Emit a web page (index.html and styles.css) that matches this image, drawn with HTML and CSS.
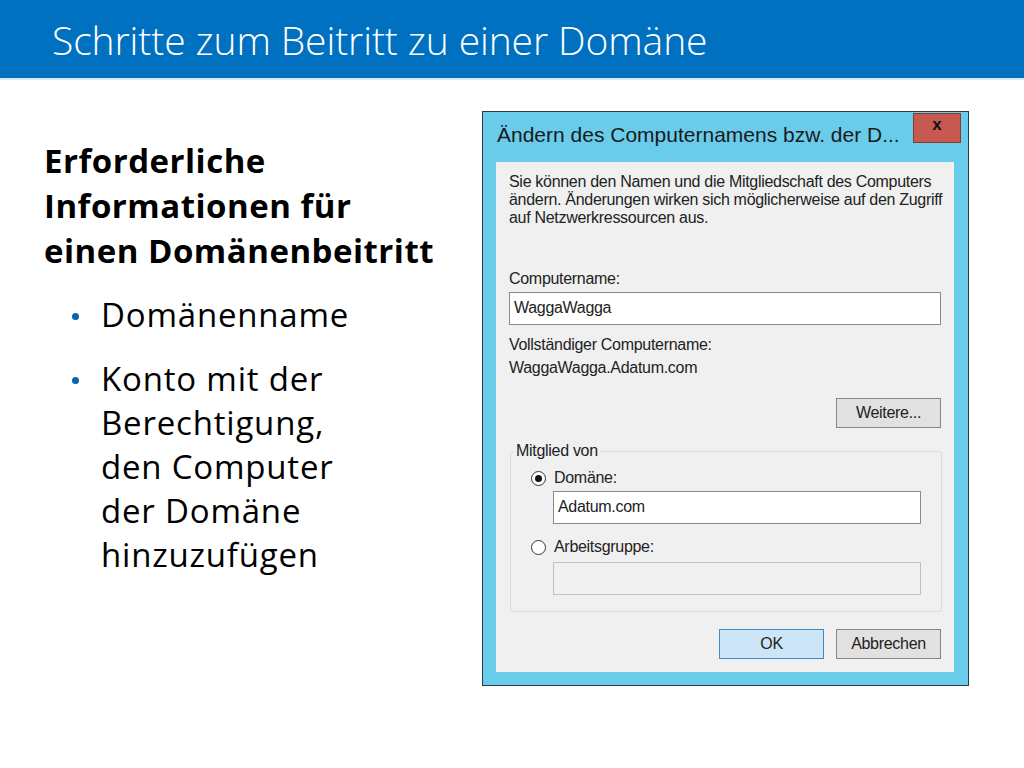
FILE: index.html
```html
<!DOCTYPE html>
<html lang="de">
<head>
    <meta charset="UTF-8">
    <title>Schritte zum Beitritt zu einer Domäne</title>
    <link rel="stylesheet" href="styles.css">
</head>
<body>

<div class="header">
    <h1>Schritte zum Beitritt zu einer Domäne</h1>
</div>

<div class="main">
    <div class="left">
        <h2>Erforderliche<br>Informationen für<br>einen Domänenbeitritt</h2>
        <ul class="bullets">
            <li>Domänenname</li>
            <li>Konto mit der<br>Berechtigung,<br>den Computer<br>der Domäne<br>hinzuzufügen</li>
        </ul>
    </div>

    <div class="dialog">
        <div class="titlebar">
            <span class="title">Ändern des Computernamens bzw. der D...</span>
            <span class="close">x</span>
        </div>
        <div class="client">
            <p class="intro">Sie können den Namen und die Mitgliedschaft des Computers<br>ändern. Änderungen wirken sich möglicherweise auf den Zugriff<br>auf Netzwerkressourcen aus.</p>

            <div class="label lbl-name">Computername:</div>
            <div class="field">WaggaWagga</div>

            <div class="label lbl-full">Vollständiger Computername:</div>
            <div class="label lbl-fqdn">WaggaWagga.Adatum.com</div>

            <div class="btn-row first">
                <span class="btn">Weitere...</span>
            </div>

            <fieldset class="group">
                <legend>Mitglied von</legend>
                <div class="radio-row"><span class="radio checked"></span>Domäne:</div>
                <div class="field sub">Adatum.com</div>
                <div class="radio-row second"><span class="radio"></span>Arbeitsgruppe:</div>
                <div class="field sub disabled"></div>
            </fieldset>

            <div class="btn-row last">
                <span class="btn default">OK</span>
                <span class="btn">Abbrechen</span>
            </div>
        </div>
    </div>
</div>

</body>
</html>
```

FILE: styles.css
```css
body {
    margin: 0;
    background: white;
    font-family: "Open Sans", "Noto Sans", sans-serif;
    color: #000;
}
.header {
    height: 78px;
    background: #0070c0;
    border-bottom: 2px solid #d4eaf7;
    display: flex;
    align-items: center;
}
.header h1 {
    margin: 0 0 0 52px;
    font-size: 39px;
    font-weight: 300;
    color: white;
    letter-spacing: -0.1px;
}
.main {
    display: flex;
    padding-top: 31px;
}
.left {
    width: 438px;
    padding-left: 44px;
}
.left h2 {
    margin: 27px 0 0 0;
    font-size: 33px;
    font-weight: 700;
    line-height: 45px;
    letter-spacing: 0.5px;
    white-space: nowrap;
}
.bullets {
    list-style: none;
    margin: 20px 0 0 0;
    padding: 0 0 0 57px;
    font-size: 33px;
    line-height: 44px;
    letter-spacing: 0.8px;
}
.bullets li {
    position: relative;
    margin-bottom: 20px;
}
.bullets li::before {
    content: "";
    position: absolute;
    left: -29px;
    top: 20px;
    width: 7px;
    height: 7px;
    border-radius: 50%;
    background: #0f62a8;
}

/* dialog */
.dialog {
    width: 485px;
    height: 573px;
    border: 1px solid #2a3b44;
    background: #69cceb;
    display: flex;
    flex-direction: column;
    font-family: "Liberation Sans", Arial, sans-serif;
}
.titlebar {
    display: flex;
    align-items: flex-start;
    height: 50px;
    padding-right: 7px;
}
.title {
    flex: 1;
    font-size: 21px;
    color: #1a1a1a;
    padding: 11px 0 0 14px;
    white-space: nowrap;
}
.close {
    width: 46px;
    height: 28px;
    margin-top: 1px;
    background: #c75a50;
    border: 1px solid #8d3a33;
    color: #111;
    font-weight: 700;
    font-size: 17px;
    text-align: center;
    line-height: 22px;
}
.client {
    margin: 0 14px 13px 13px;
    flex: 1;
    background: #f0f0f0;
    padding: 0 13px;
    font-size: 16px;
    color: #222;
    letter-spacing: -0.3px;
}
.intro {
    margin: 11px 0 0 0;
    line-height: 18px;
    white-space: nowrap;
}
.label {
    line-height: 18px;
}
.lbl-name { margin-top: 43px; }
.lbl-full { margin-top: 11px; }
.lbl-fqdn { margin-top: 5px; }
.field {
    height: 31px;
    margin-top: 4px;
    background: white;
    border: 1px solid #8a8a8a;
    padding-left: 4px;
    line-height: 30px;
    font-size: 16px;
}
.btn-row {
    display: flex;
    justify-content: flex-end;
    gap: 12px;
}
.btn-row.first { margin-top: 21px; }
.btn-row.last { margin-top: 17px; }
.btn {
    width: 103px;
    height: 28px;
    border: 1px solid #858585;
    background: #e1e1e1;
    text-align: center;
    line-height: 28px;
    font-size: 16px;
}
.btn.default {
    background: #cde6f7;
    border-color: #3f8ac5;
}
.group {
    margin: 14px -1px 0 1px;
    padding: 0 20px 16px 20px;
    border: 1px solid #dcdcdc;
    border-radius: 3px;
}
.group legend {
    padding: 0 2px;
    margin-left: -17px;
    line-height: 18px;
}
.radio-row {
    display: flex;
    align-items: center;
    line-height: 18px;
    margin-top: 9px;
}
.radio-row.second { margin-top: 14px; }
.radio {
    width: 13px;
    height: 13px;
    border: 1px solid #333;
    border-radius: 50%;
    background: white;
    margin-right: 8px;
    position: relative;
}
.radio.checked::after {
    content: "";
    position: absolute;
    left: 3px;
    top: 3px;
    width: 7px;
    height: 7px;
    border-radius: 50%;
    background: #111;
}
.field.sub {
    margin-left: 22px;
    margin-top: 4px;
}
.field.disabled {
    background: #f0f0f0;
    border-color: #c0c0c0;
    margin-top: 6px;
}
```
